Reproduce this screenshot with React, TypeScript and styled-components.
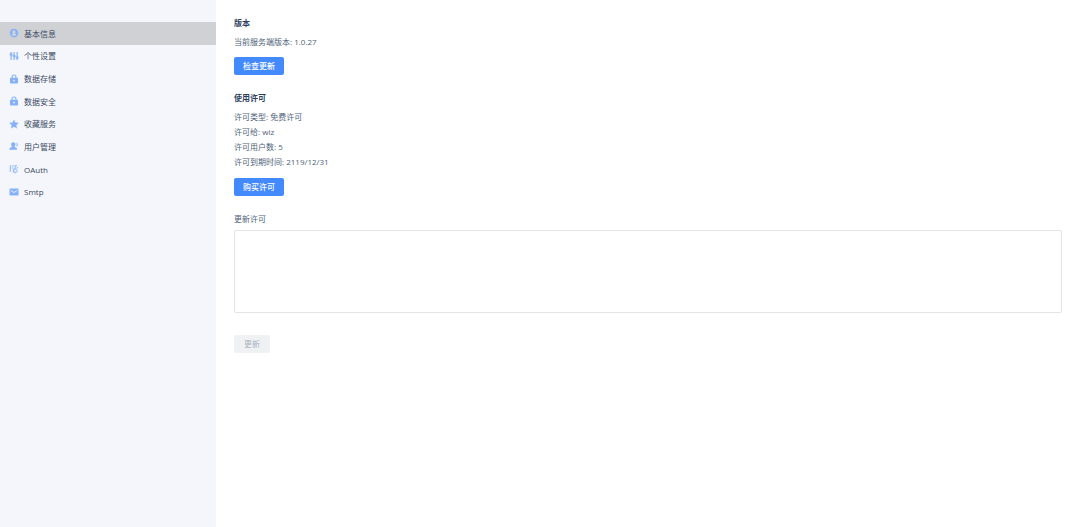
import React, { useState } from "react";
import styled, { createGlobalStyle } from "styled-components";

const GlobalStyle = createGlobalStyle`
  *, *::before, *::after { box-sizing: border-box; }
  body {
    margin: 0;
    background: #fff;
    color: #505f79;
    font-family: "Open Sans", "Noto Sans CJK SC", sans-serif;
    font-size: 8px;
    line-height: 15px;
  }
  button, textarea { font: inherit; }
`;

const Page = styled.div`
  display: flex;
  min-height: 100vh;
`;

const Sidebar = styled.aside`
  flex: 0 0 20%;
  padding-top: 22px;
  background: #f4f6fb;
`;

const Menu = styled.nav`
  display: grid;
  grid-auto-rows: 1fr;
  height: 181px;
`;

const MenuLink = styled.a<{ $active?: boolean }>`
  display: flex;
  align-items: center;
  gap: 5px;
  padding: 0 9px;
  color: #3c4a63;
  text-decoration: none;
  background: ${(p) => (p.$active ? "#d0d1d5" : "transparent")};
`;

const Icon = styled.svg`
  flex: none;
  width: 10px;
  height: 10px;
  fill: #85b1fb;
`;

const Content = styled.main`
  flex: 1;
  min-width: 0;
  padding: 15px 18px;
`;

const Section = styled.section`
  margin-bottom: 15px;
`;

const Title = styled.h2`
  margin: 0 0 4px;
  font-size: 8px;
  font-weight: 700;
  color: #2d3f5e;
`;

const Line = styled.p`
  margin: 0;
`;

const Facts = styled.ul`
  margin: 0 0 9px;
  padding: 0;
  list-style: none;
`;

const Button = styled.button`
  display: block;
  height: 18px;
  min-width: 36px;
  margin-top: 8px;
  padding: 0 9px;
  border: 0;
  border-radius: 2px;
  line-height: 18px;
  font-weight: 500;
  color: #fff;
  background: #448aff;
  &:disabled {
    color: #a9b2c0;
    background: #f0f1f3;
    font-weight: 400;
  }
`;

const Label = styled.label`
  display: block;
  margin-bottom: 3px;
  line-height: 16px;
`;

const LicenseInput = styled.textarea`
  display: block;
  width: 100%;
  height: 83px;
  margin-bottom: 22px;
  padding: 4px 8px;
  border: 1px solid #e5e5e6;
  border-radius: 2px;
  background: #fff;
  color: inherit;
  resize: none;
`;

const lock = (
  <path
    fillRule="evenodd"
    d="M5 7.500V6a5 5 0 0 1 10 0v1.500h1.500q1.500 0 1.500 1.500v8.500q0 1.500-1.500 1.500h-13q-1.500 0-1.500-1.500V9q0-1.500 1.500-1.500zM7.200 7.500h5.600V6a2.800 2.800 0 0 0-5.600 0zM10 11.500a1.500 1.500 0 1 0 .01 0z"
  />
);

const items = [
  {
    name: "基本信息",
    icon: (
      <path
        fillRule="evenodd"
        d="M10 1.500a8.500 8.500 0 1 0 .01 0zM10 4.500c2 0 3.200 1.400 3.200 3.300 0 1.500-.6 2.600-1.500 3.300 1.600.5 2.900 1.200 3.300 2.500-1.200 1.500-3 2.400-5 2.400s-3.800-.9-5-2.400c.4-1.300 1.700-2 3.300-2.500-.9-.7-1.500-1.800-1.500-3.300 0-1.900 1.200-3.300 3.200-3.300z"
      />
    ),
  },
  {
    name: "个性设置",
    icon: (
      <path d="M3 2h2.500v3h1.500v4H5.500v9H3V9H1.500V5H3zM9 2h2.500v6H13v4h-1.500v6H9v-6H7.500V8H9zM15 2h2.500v9H19v4h-1.500v3H15v-3h-1.500v-4H15z" />
    ),
  },
  { name: "数据存储", icon: lock },
  { name: "数据安全", icon: lock },
  {
    name: "收藏服务",
    icon: (
      <path d="m10 1 2.800 5.800 6.700.9-4.800 4.600 1.200 6.500L10 15.700l-5.900 3.100 1.200-6.500L.5 7.700l6.700-.9z" />
    ),
  },
  {
    name: "用户管理",
    icon: (
      <>
        <path d="M8.500 2.500c2.800 0 4.300 1.900 4.300 4.400 0 2-.8 3.500-2 4.400v.6c3 .7 5.200 1.600 5.200 4.100v1.500H1V16c0-2.500 2.200-3.400 5.200-4.100v-.6c-1.200-.9-2-2.400-2-4.400 0-2.500 1.500-4.400 4.300-4.400z" />
        <path
          opacity=".55"
          d="M14 3.500c2.500 0 4.500 1 4.500 3.500 0 1.800-.8 3-2 4h-2.800c.6-1.200.9-2.500.9-4 0-1.300-.2-2.500-.6-3.500z"
        />
      </>
    ),
  },
  {
    name: "OAuth",
    icon: (
      <g opacity=".75">
        <path d="M1.500 2.500H4v13H1.500zM5.500 2.500h3.500v3H5.500zM5.500 7h3v2.500h-3z" />
        <path
          fillRule="evenodd"
          d="M11 2h5v2.500h-2.500v4.200a5 5 0 1 1-2.500 0zM13 11a2.300 2.300 0 1 0 .01 0zM15.500 6H18v2.500h-2.500z"
        />
      </g>
    ),
  },
  {
    name: "Smtp",
    icon: (
      <path
        fillRule="evenodd"
        d="M2.500 3h15Q19 3 19 4.500v11q0 1.500-1.500 1.500h-15Q1 17 1 15.500v-11Q1 3 2.500 3zM3.500 6v1.700L10 12l6.500-4.300V6L10 10.200z"
      />
    ),
  },
];

const license = [
  "许可类型: 免费许可",
  "许可给: wiz",
  "许可用户数: 5",
  "许可到期时间: 2119/12/31",
];

export default function App() {
  const [active, setActive] = useState(0);
  const [code, setCode] = useState("");

  return (
    <>
      <GlobalStyle />
      <Page>
        <Sidebar>
          <Menu>
            {items.map((item, i) => (
              <MenuLink
                key={item.name}
                href="#"
                $active={i === active}
                onClick={() => setActive(i)}
              >
                <Icon viewBox="0 0 20 20" aria-hidden="true">
                  {item.icon}
                </Icon>
                {item.name}
              </MenuLink>
            ))}
          </Menu>
        </Sidebar>
        <Content>
          <Section>
            <Title>版本</Title>
            <Line>当前服务端版本: 1.0.27</Line>
            <Button type="button">检查更新</Button>
          </Section>
          <Section>
            <Title>使用许可</Title>
            <Facts>
              {license.map((text) => (
                <li key={text}>{text}</li>
              ))}
            </Facts>
            <Button type="button">购买许可</Button>
          </Section>
          <Section>
            <Label htmlFor="license">更新许可</Label>
            <LicenseInput
              id="license"
              value={code}
              onChange={(e) => setCode(e.target.value)}
            />
            <Button type="button" disabled={!code}>
              更新
            </Button>
          </Section>
        </Content>
      </Page>
    </>
  );
}
